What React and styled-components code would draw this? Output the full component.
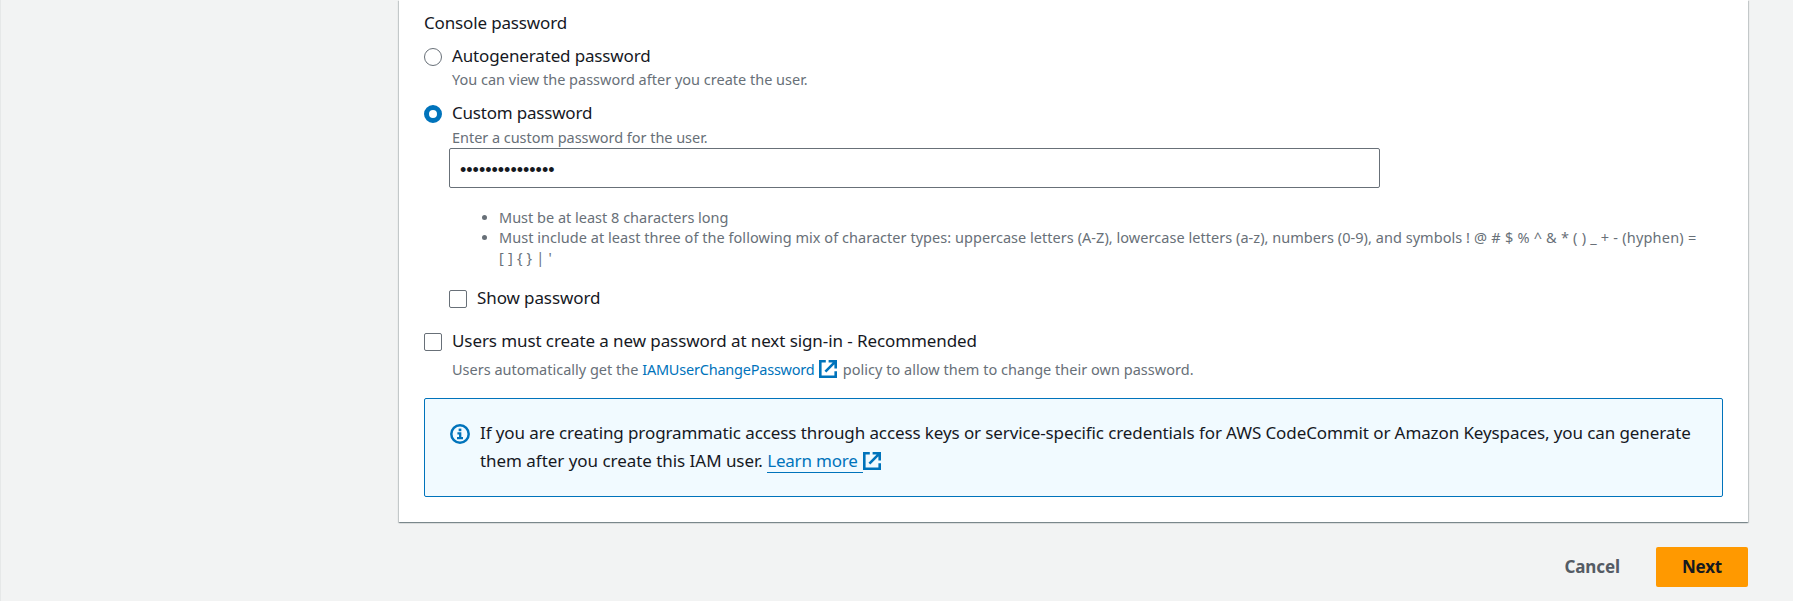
import React from 'react';
import styled, { createGlobalStyle } from 'styled-components';

const GlobalStyle = createGlobalStyle`
  * { box-sizing: border-box; }
  body {
    margin: 0;
    background: #f2f3f3;
    color: #16191f;
    font-family: "Noto Sans", "Open Sans", sans-serif;
  }
`;

const Page = styled.main`
  height: 601px;
  overflow: hidden;
  border-left: 1px solid #e6e8e8;
  padding: 0 45px 0 398px;
`;

const Card = styled.section`
  height: 522px;
  padding: 8px 25px 0;
  background: #fff;
  box-shadow: 0 1px 1px 0 rgba(0, 28, 36, 0.3), 1px 1px 1px 0 rgba(0, 28, 36, 0.15),
    -1px 1px 1px 0 rgba(0, 28, 36, 0.15);
`;

const Text = styled.span`
  letter-spacing: ${(p) => p.$tracking || 0}px;
`;

const FieldLabel = styled.div`
  height: 28px;
  font-size: 17px;
  line-height: 30px;
  white-space: nowrap;
`;

const Option = styled.div`
  display: flex;
  align-items: flex-start;
  gap: 10px;
  margin-top: ${(p) => p.$top}px;
  margin-left: ${(p) => p.$indent || 0}px;
`;

const Description = styled.div`
  display: flex;
  align-items: center;
  height: 20px;
  margin-top: ${(p) => p.$top || 0}px;
  margin-bottom: ${(p) => p.$bottom || 0}px;
  font-size: 14.5px;
  line-height: 20px;
  color: #687078;
  white-space: pre;
`;

const Radio = styled.span`
  flex: none;
  width: 18px;
  height: 18px;
  margin-top: 7px;
  border: ${(p) => (p.$checked ? '5.5px solid #0073bb' : '1px solid #687078')};
  border-radius: 50%;
  background: #fff;
`;

const Checkbox = styled.span`
  flex: none;
  width: 18px;
  height: 18px;
  margin-top: 7px;
  border: 1px solid #687078;
  border-radius: 2px;
  background: #fff;
`;

const PasswordInput = styled.div`
  display: flex;
  align-items: center;
  width: 931px;
  height: 40px;
  margin: 0 0 19px 25px;
  padding: 4px 0 0 10px;
  border: 1px solid #687078;
  border-radius: 2px;
  font: 18px/34px "Liberation Sans", sans-serif;
`;

const Rules = styled.ul`
  margin: 0 0 0 75px;
  padding: 0;
  width: 1206px;
  list-style: none;
  font-size: 14.5px;
  line-height: 20px;
  color: #687078;
`;

const Rule = styled.li`
  display: flex;
  margin-left: -17px;
  &::before {
    content: '';
    flex: none;
    width: 5px;
    height: 5px;
    margin: 8px 12px 0 0;
    border-radius: 50%;
    background: #687078;
  }
`;

const Link = styled.a`
  display: inline-flex;
  align-items: center;
  color: #0073bb;
  letter-spacing: ${(p) => p.$tracking || 0}px;
  text-decoration: none;
`;

const Underlined = styled.span`
  height: 24px;
  line-height: 24px;
  padding-right: 5px;
  border-bottom: 1px solid #0073bb;
`;

const Alert = styled.aside`
  display: flex;
  gap: 10px;
  height: 99px;
  margin-top: 19px;
  padding: 20px 25px 0;
  border: 1px solid #0073bb;
  border-radius: 2px;
  background: #f1faff;
  font-size: 17px;
  line-height: 28px;
`;

const AlertLine = styled.div`
  display: flex;
  height: 28px;
  white-space: pre;
`;

const InfoSvg = styled.svg`
  flex: none;
  margin-top: 5px;
`;

const LinkSvg = styled.svg`
  flex: none;
  margin: 0 0 0 ${(p) => p.$left}px;
`;

const Actions = styled.footer`
  display: flex;
  justify-content: flex-end;
  align-items: center;
  gap: 36px;
  margin-top: 25px;
`;

const Button = styled.button`
  height: 40px;
  width: ${(p) => (p.$primary ? '92px' : 'auto')};
  padding: 0;
  border: 0;
  border-radius: 2px;
  background: ${(p) => (p.$primary ? '#ff9900' : 'transparent')};
  color: ${(p) => (p.$primary ? '#16191f' : '#545b64')};
  font: 700 17px/36px "Noto Sans", sans-serif;
  letter-spacing: ${(p) => p.$tracking || 0}px;
`;

const ExternalIcon = ({ left }) => (
  <LinkSvg $left={left} width="18" height="18" viewBox="0 0 18 18" fill="none" stroke="#0073bb" strokeWidth="2.6">
    <path d="M6.8 1.3H1.3V16.7H16.7V11.2" />
    <path d="M9.6 1.3H16.7V8.4M16.3 1.7L6.4 11.6" />
  </LinkSvg>
);

const InfoIcon = () => (
  <InfoSvg width="20" height="20" viewBox="0 0 20 20" fill="none" stroke="#0073bb">
    <circle cx="10" cy="10" r="8.7" strokeWidth="2.5" />
    <path d="M10 4.6V7.2" strokeWidth="2.7" />
    <path d="M7.4 9.3H10.2V14M7 14.1H13" strokeWidth="2.3" />
  </InfoSvg>
);

const SYMBOLS = "! @ # $ % ^ & * ( ) _ + - (hyphen) = [ ] { } | '";

export default function App() {
  return (
    <>
      <GlobalStyle />
      <Page>
        <Card>
          <FieldLabel><Text $tracking={-0.15}>Console password</Text></FieldLabel>
          <Option $top={5}>
            <Radio />
            <div>
              <FieldLabel><Text $tracking={-0.15}>Autogenerated password</Text></FieldLabel>
              <Description $bottom={1}>You can view the password after you create the user.</Description>
            </div>
          </Option>
          <Option $top={8}>
            <Radio $checked />
            <div>
              <FieldLabel><Text $tracking={-0.2}>Custom password</Text></FieldLabel>
              <Description $top={1} $bottom={1}><Text $tracking={-0.04}>Enter a custom password for the user.</Text></Description>
            </div>
          </Option>
          <PasswordInput>•••••••••••••••</PasswordInput>
          <Rules>
            <Rule>Must be at least 8 characters long</Rule>
            <Rule>
              <div>
                <Text $tracking={0.04}>
                  Must include at least three of the following mix of character types: uppercase letters (A-Z),
                  lowercase letters (a-z), numbers (0-9), and symbols
                </Text>{' '}
                <Text $tracking={0.21}>{SYMBOLS}</Text>
              </div>
            </Rule>
          </Rules>
          <Option $top={16} $indent={25}>
            <Checkbox />
            <FieldLabel><Text $tracking={-0.1}>Show password</Text></FieldLabel>
          </Option>
          <Option $top={15}>
            <Checkbox />
            <div>
              <FieldLabel><Text $tracking={-0.09}>Users must create a new password at next sign-in - Recommended</Text></FieldLabel>
              <Description $top={5}>
                <span>Users automatically get the </span>
                <Link $tracking={-0.22}>IAMUserChangePassword<ExternalIcon left={4} /></Link>
                <Text $tracking={0.02}>{'\u2009'} policy to allow them to change their own password.</Text>
              </Description>
            </div>
          </Option>
          <Alert>
            <InfoIcon />
            <div>
              <AlertLine>
                <Text $tracking={-0.1}>If you are creating programmatic access through access keys or service-specific credentials for AWS CodeCommit or Amazon Keyspaces, you can generate</Text>
              </AlertLine>
              <AlertLine>
                <Text $tracking={-0.04}>them after you create this IAM user. </Text>
                <Link $tracking={-0.2}><Underlined>Learn more</Underlined><ExternalIcon left={0} /></Link>
              </AlertLine>
            </div>
          </Alert>
        </Card>
        <Actions>
          <Button $tracking={-0.1}>Cancel</Button>
          <Button $primary $tracking={-0.2}>Next</Button>
        </Actions>
      </Page>
    </>
  );
}
